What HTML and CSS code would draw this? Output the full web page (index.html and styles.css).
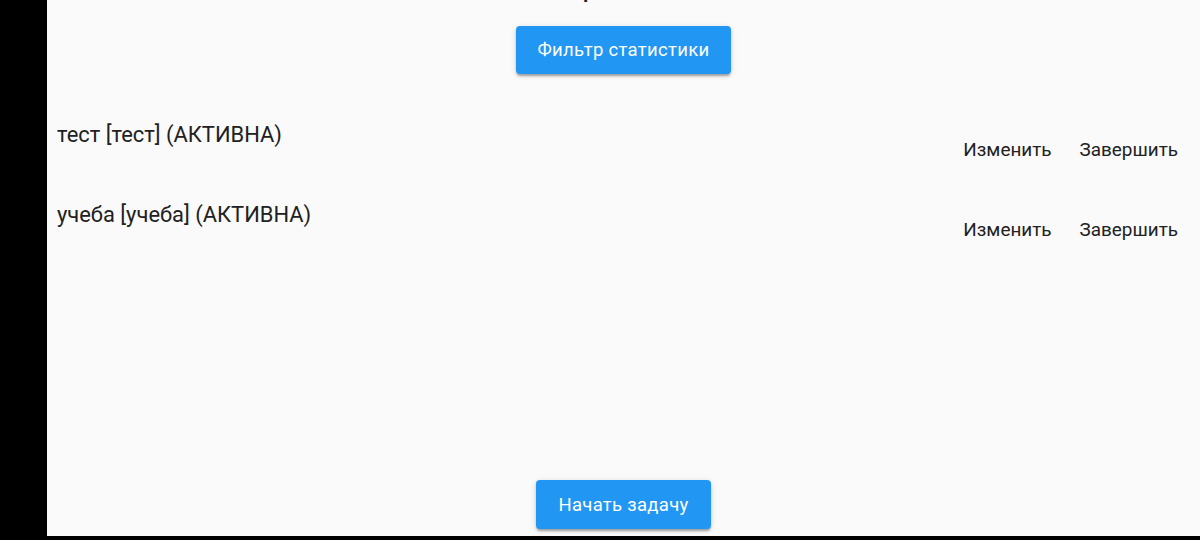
FILE: index.html
```
<!DOCTYPE html>
<html lang="ru">
<head>
<meta charset="utf-8">
<link rel="stylesheet" href="styles.css">
</head>
<body>
<div class="screen">
  <div class="side"></div>
  <div class="main">
    <div class="content">
      <div class="title">Проекты</div>
      <div class="top-action">
        <button class="btn">Фильтр статистики</button>
      </div>
      <div class="list">
        <div class="row">
          <div class="row-title">тест [тест] (АКТИВНА)</div>
          <div class="row-actions">
            <button class="text-btn">Изменить</button>
            <button class="text-btn">Завершить</button>
          </div>
        </div>
        <div class="row">
          <div class="row-title">учеба [учеба] (АКТИВНА)</div>
          <div class="row-actions">
            <button class="text-btn">Изменить</button>
            <button class="text-btn">Завершить</button>
          </div>
        </div>
      </div>
      <div class="bottom-action">
        <button class="btn btn-bottom">Начать задачу</button>
      </div>
    </div>
    <div class="bottom-bar"></div>
  </div>
</div>
</body>
</html>
```
FILE: styles.css
```
* { box-sizing: border-box; }
html, body {
  margin: 0;
  padding: 0;
  width: 1200px;
  height: 540px;
  overflow: hidden;
  background: #000;
  font-family: Roboto, "Noto Sans", sans-serif;
}
.screen {
  display: flex;
  width: 1200px;
  height: 540px;
}
.side {
  width: 47px;
  flex: none;
  background: #000;
}
.main {
  flex: 1;
  display: flex;
  flex-direction: column;
}
.content {
  flex: 1;
  background: #fafafa;
  display: flex;
  flex-direction: column;
  overflow: hidden;
}
.bottom-bar {
  height: 4px;
  background: #000;
}
.title {
  font-size: 30px;
  line-height: 36px;
  height: 36px;
  margin-top: -32px;
  text-align: center;
  color: #212121;
}
.top-action {
  display: flex;
  justify-content: center;
  margin-top: 22px;
}
.btn {
  font-family: Roboto, "Noto Sans", sans-serif;
  font-size: 18.5px;
  color: #fff;
  background: #2196f3;
  border: none;
  border-radius: 4px;
  height: 48px;
  padding: 0 22px;
  box-shadow: 0 3px 2px -1px rgba(0,0,0,0.2), 0 2px 3px 0 rgba(0,0,0,0.14), 0 1px 6px 0 rgba(0,0,0,0.12);
  letter-spacing: 0.3px;
}
.list {
  display: flex;
  flex-direction: column;
  margin-top: 46px;
}
.row {
  display: flex;
  justify-content: space-between;
  align-items: flex-start;
  height: 80px;
  padding-left: 10px;
  padding-right: 10px;
}
.row-title {
  font-size: 21.9px;
  line-height: 30px;
  color: #212121;
}
.row-actions {
  display: flex;
  gap: 4px;
  margin-top: 9px;
}
.text-btn {
  font-family: Roboto, "Noto Sans", sans-serif;
  font-size: 18.9px;
  color: #212121;
  background: none;
  border: none;
  padding: 0 12px;
  height: 40px;
}
.bottom-action {
  margin-top: auto;
  display: flex;
  justify-content: center;
  padding-bottom: 7px;
}
.btn-bottom {
  height: 49px;
}
```
